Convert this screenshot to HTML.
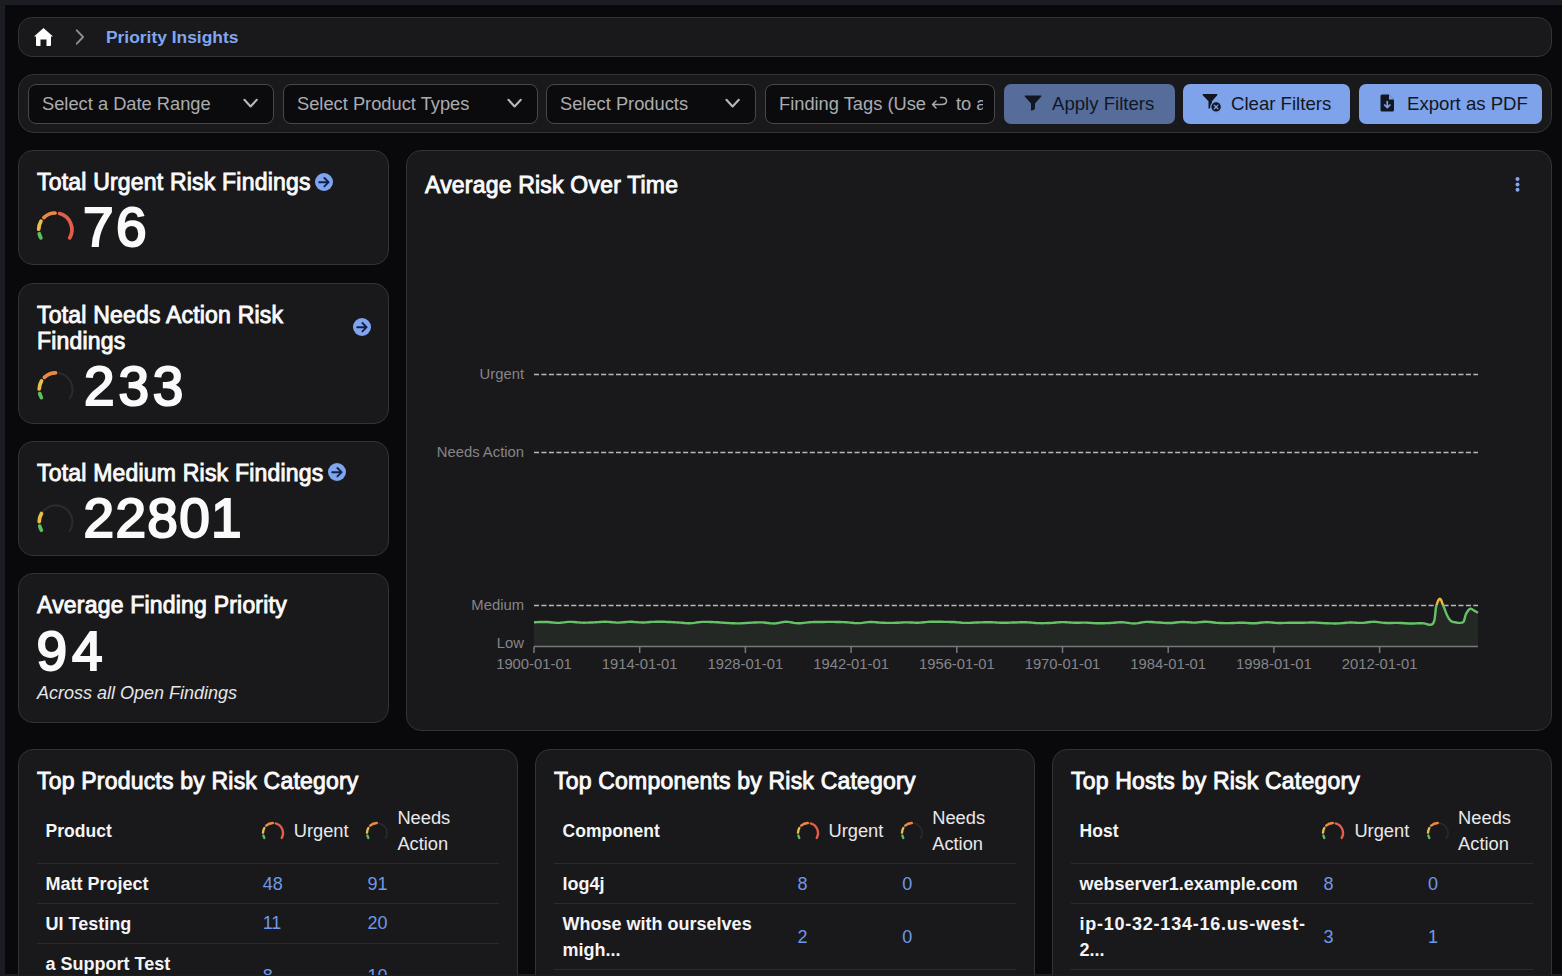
<!DOCTYPE html>
<html><head><meta charset="utf-8">
<style>
*{box-sizing:border-box;margin:0;padding:0}
html,body{width:1562px;height:976px;overflow:hidden;background:#1b1d22;font-family:"Liberation Sans",sans-serif;color:#fff}
#main{position:absolute;left:5px;top:5px;width:1557px;height:969px;background:#09090b;overflow:hidden}
.abs{position:absolute}
.box{position:absolute;background:#19191c;border:1px solid #333336;border-radius:15px}
.sel{position:absolute;top:84px;height:40px;background:#0b0b0d;border:1px solid #48484c;border-radius:8px;color:#abacb0;font-size:18.3px;line-height:38px;padding-left:13px;white-space:nowrap;overflow:hidden}
.sel svg{position:absolute;right:14px;top:13px}
.btn{position:absolute;top:84px;height:40px;border-radius:7px;background:#7ea3ea;color:#111622;font-size:18.6px;line-height:40px;white-space:nowrap}
.btn svg{position:absolute}
.btn span{position:absolute;top:0}
.title{position:absolute;font-weight:normal;-webkit-text-stroke:0.9px #fafafa;font-size:23px;line-height:26px;letter-spacing:0.2px;white-space:nowrap;color:#fafafa}
.big{position:absolute;font-weight:normal;-webkit-text-stroke:2.1px #fafafa;font-size:55px;line-height:1;letter-spacing:1.3px;color:#fafafa}
.gl{position:absolute;font-size:14.8px;color:#858589;text-align:right;white-space:nowrap}
.xl{position:absolute;font-size:14.8px;color:#858589;white-space:nowrap;transform:translateX(-50%)}
.th{position:absolute;font-weight:bold;font-size:17.5px;line-height:22px;white-space:nowrap;color:#f4f4f5}
.thn{position:absolute;font-size:18.3px;line-height:22px;white-space:nowrap;color:#e8e8ea}
.td{position:absolute;font-weight:bold;font-size:18px;line-height:26px;white-space:nowrap;color:#f4f4f5}
.num{position:absolute;font-size:18px;line-height:22px;color:#6f98e6}
.sep{position:absolute;height:1px;background:#2b2b2e}
</style></head><body>
<div id="main"></div>
<!-- breadcrumb -->
<div class="box" style="left:18px;top:17px;width:1534px;height:40px;border-radius:14px"></div>
<svg class="abs" style="left:33px;top:27px" width="21" height="20" viewBox="0 0 21 20"><path d="M10.5 1 L20 9.5 L18 9.5 L18 18 Q18 19 17 19 L13.5 19 L13.5 12.5 L7.5 12.5 L7.5 19 L4 19 Q3 19 3 18 L3 9.5 L1 9.5 Z" fill="#fff"/></svg>
<svg class="abs" style="left:73px;top:28px" width="14" height="18" viewBox="0 0 14 18"><path d="M3.8 2.3 L10.1 9 L3.8 15.7" stroke="#8e8e92" stroke-width="1.9" fill="none" stroke-linecap="round" stroke-linejoin="round"/></svg>
<div class="abs" style="left:106px;top:27px;font-size:17.4px;font-weight:bold;color:#80a7ef;white-space:nowrap">Priority Insights</div>

<!-- filter bar -->
<div class="box" style="left:18px;top:74px;width:1534px;height:59px;border-radius:16px"></div>
<div class="sel" style="left:28px;width:246px">Select a Date Range<svg width="16" height="12" viewBox="0 0 16 12"><path d="M1.4 1.8 L7.6 8.5 L13.8 1.8" stroke="#b6b6b9" stroke-width="2.1" fill="none" stroke-linecap="round" stroke-linejoin="round"/></svg></div>
<div class="sel" style="left:283px;width:255px">Select Product Types<svg width="16" height="12" viewBox="0 0 16 12"><path d="M1.4 1.8 L7.6 8.5 L13.8 1.8" stroke="#b6b6b9" stroke-width="2.1" fill="none" stroke-linecap="round" stroke-linejoin="round"/></svg></div>
<div class="sel" style="left:546px;width:210px">Select Products<svg width="16" height="12" viewBox="0 0 16 12"><path d="M1.4 1.8 L7.6 8.5 L13.8 1.8" stroke="#b6b6b9" stroke-width="2.1" fill="none" stroke-linecap="round" stroke-linejoin="round"/></svg></div>
<div class="sel" style="left:765px;width:230px"><div style="position:absolute;left:13px;top:0;width:204px;height:38px;overflow:hidden"><span style="position:absolute;left:0;top:0">Finding Tags (Use</span><svg style="position:absolute;left:151.5px;top:11px" width="18" height="15" viewBox="0 0 18 15"><path d="M1.5 8.5H10.5Q15.5 8.5 15.5 5Q15.5 1.5 11 1.5H9.5M5 5L1.5 8.5L5 12" stroke="#a9a9ad" stroke-width="1.5" fill="none" stroke-linecap="round" stroke-linejoin="round"/></svg><span style="position:absolute;left:177px;top:0">to add)</span></div></div>

<div class="btn" style="left:1004px;width:171px;background:#566d9c"><svg style="left:20px;top:11px" width="18" height="16" viewBox="0 0 18 16"><path d="M1.3 0.4H16.7Q18 0.4 17.2 1.5L11 8.6V13.6Q11 14.2 10.4 14.5L7.9 15.6Q7 16 7 15V8.6L0.8 1.5Q0 0.4 1.3 0.4Z" fill="#121622"/></svg><span style="left:48px">Apply Filters</span></div>
<div class="btn" style="left:1183px;width:167px"><svg style="left:18px;top:9px" width="22" height="20" viewBox="0 0 22 20"><path d="M2.4 1.1H15.6Q17 1.1 16.2 2.2L11 8.2V13.5Q11 14 10.5 14.3L8.3 15.5Q7.5 16 7.5 15V8.2L1.8 2.2Q1 1.1 2.4 1.1Z" fill="#121622"/><circle cx="15.1" cy="13.9" r="5.3" fill="#121622" stroke="#7ea3ea" stroke-width="1.2"/><path d="M13.3 12.1L16.9 15.7M16.9 12.1L13.3 15.7" stroke="#7ea3ea" stroke-width="1.3" stroke-linecap="round"/></svg><span style="left:48px">Clear Filters</span></div>
<div class="btn" style="left:1359px;width:183px"><svg style="left:21px;top:10px" width="15" height="18" viewBox="0 0 15 18"><path d="M0.5 1.9Q0.5 0.4 2 0.4H9L14 5.4V15.9Q14 17.4 12.5 17.4H2Q0.5 17.4 0.5 15.9Z" fill="#121622"/><path d="M9 0.4V5.4H14Z" fill="#7ea3ea"/><path d="M9.6 0.9V4.8H13.5" fill="none" stroke="#121622" stroke-width="0"/><path d="M7.25 7.5V13.5M4.6 11 7.25 13.6 9.9 11" stroke="#7ea3ea" stroke-width="1.7" fill="none" stroke-linecap="round" stroke-linejoin="round"/></svg><span style="left:48px">Export as PDF</span></div>

<!-- stat cards -->
<div class="box" style="left:18px;top:150px;width:371px;height:115px"></div>
<div class="box" style="left:18px;top:283px;width:371px;height:141px"></div>
<div class="box" style="left:18px;top:441px;width:371px;height:115px"></div>
<div class="box" style="left:18px;top:573px;width:371px;height:150px"></div>

<div class="title" style="left:37px;top:169px">Total Urgent Risk Findings</div>
<div class="title" style="left:37px;top:302px;line-height:26px;white-space:normal;width:300px">Total Needs Action Risk Findings</div>
<div class="title" style="left:37px;top:460px">Total Medium Risk Findings</div>
<div class="title" style="left:37px;top:592px">Average Finding Priority</div>

<div class="big" style="left:83px;top:200px;letter-spacing:2.5px">76</div>
<div class="big" style="left:84px;top:359px;letter-spacing:3.8px">233</div>
<div class="big" style="left:83.5px;top:491px">22801</div>
<div class="big" style="left:36.5px;top:624px;letter-spacing:5px">94</div>
<div class="abs" style="left:37px;top:683px;font-size:18px;font-style:italic;color:#e6e6e8;white-space:nowrap">Across all Open Findings</div>

<!-- chart card -->
<div class="box" style="left:406px;top:150px;width:1146px;height:581px"></div>
<div class="title" style="left:425px;top:172px">Average Risk Over Time</div>
<svg class="abs" style="left:1513px;top:175px" width="9" height="19"><circle cx="4.5" cy="4" r="2" fill="#80a7ef"/><circle cx="4.5" cy="9.4" r="2" fill="#80a7ef"/><circle cx="4.5" cy="14.8" r="2" fill="#80a7ef"/></svg>

<svg class="abs" style="left:0;top:0" width="400" height="560"><path d="M40.87 237.80A16.6 16.6 0 0 1 39.22 233.72" stroke="#5fbf5f" stroke-width="3.7" fill="none" stroke-linecap="round"/><path d="M38.70 229.20A16.6 16.6 0 0 1 41.01 221.15" stroke="#e8bf4a" stroke-width="3.7" fill="none" stroke-linecap="round"/><path d="M43.85 217.58A16.6 16.6 0 0 1 55.04 213.00" stroke="#ea8a42" stroke-width="3.7" fill="none" stroke-linecap="round"/><path d="M59.56 213.56A16.6 16.6 0 0 1 69.73 237.80" stroke="#e35d4b" stroke-width="3.7" fill="none" stroke-linecap="round"/><path d="M58.80 373.07A16.6 16.6 0 0 1 69.82 398.29" stroke="#2b2b2e" stroke-width="2.1" fill="none" stroke-linecap="round"/><path d="M41.37 397.60A16.6 16.6 0 0 1 39.72 393.52" stroke="#5fbf5f" stroke-width="3.7" fill="none" stroke-linecap="round"/><path d="M39.20 389.00A16.6 16.6 0 0 1 41.51 380.95" stroke="#e8bf4a" stroke-width="3.7" fill="none" stroke-linecap="round"/><path d="M44.35 377.38A16.6 16.6 0 0 1 55.54 372.80" stroke="#ea8a42" stroke-width="3.7" fill="none" stroke-linecap="round"/><path d="M43.45 510.91A16.6 16.6 0 0 1 69.82 530.89" stroke="#2b2b2e" stroke-width="2.1" fill="none" stroke-linecap="round"/><path d="M41.37 530.20A16.6 16.6 0 0 1 39.72 526.12" stroke="#5fbf5f" stroke-width="3.7" fill="none" stroke-linecap="round"/><path d="M39.20 521.60A16.6 16.6 0 0 1 41.51 513.55" stroke="#e8bf4a" stroke-width="3.7" fill="none" stroke-linecap="round"/></svg><svg class="abs" style="left:315px;top:172.6px" width="18" height="18" viewBox="0 0 18 18"><circle cx="9" cy="9" r="9" fill="#7fa5ee"/><path d="M4.2 9.2H13.6M9.4 5 13.6 9.2 9.4 13.4" stroke="#15204a" stroke-width="1.9" fill="none" stroke-linecap="round" stroke-linejoin="round"/></svg><svg class="abs" style="left:353.3px;top:318px" width="18" height="18" viewBox="0 0 18 18"><circle cx="9" cy="9" r="9" fill="#7fa5ee"/><path d="M4.2 9.2H13.6M9.4 5 13.6 9.2 9.4 13.4" stroke="#15204a" stroke-width="1.9" fill="none" stroke-linecap="round" stroke-linejoin="round"/></svg><svg class="abs" style="left:327.5px;top:463px" width="18" height="18" viewBox="0 0 18 18"><circle cx="9" cy="9" r="9" fill="#7fa5ee"/><path d="M4.2 9.2H13.6M9.4 5 13.6 9.2 9.4 13.4" stroke="#15204a" stroke-width="1.9" fill="none" stroke-linecap="round" stroke-linejoin="round"/></svg><svg class="abs" style="left:0;top:0" width="1562" height="976">
<path d="M534 374.5H1478" stroke="#b8b8bb" stroke-width="1.3" stroke-dasharray="5.05 2.405"/>
<path d="M534 452.5H1478" stroke="#b8b8bb" stroke-width="1.3" stroke-dasharray="5.05 2.405"/>
<path d="M534 605.5H1478" stroke="#b8b8bb" stroke-width="1.3" stroke-dasharray="5.05 2.405"/>
<path d="M534.0 622.28 L535.3 622.24 L537.1 622.16 L539.2 622.07 L541.6 622.00 L543.9 621.96 L546.0 621.97 L548.0 622.07 L550.0 622.25 L552.0 622.47 L554.0 622.67 L556.0 622.82 L558.0 622.87 L560.0 622.79 L562.0 622.60 L564.0 622.36 L566.0 622.11 L568.0 621.92 L570.0 621.83 L572.0 621.87 L574.0 622.01 L576.0 622.20 L578.0 622.40 L580.0 622.57 L582.0 622.66 L584.0 622.68 L586.0 622.66 L588.0 622.60 L590.0 622.52 L592.0 622.44 L594.0 622.36 L596.0 622.26 L598.0 622.14 L600.0 622.01 L602.0 621.90 L604.0 621.82 L606.0 621.80 L608.0 621.88 L610.0 622.03 L612.0 622.23 L614.0 622.42 L616.0 622.56 L618.0 622.61 L620.0 622.55 L622.0 622.40 L624.0 622.20 L626.0 622.00 L628.0 621.84 L630.0 621.77 L632.0 621.81 L634.0 621.94 L636.0 622.11 L638.0 622.29 L640.0 622.42 L642.0 622.48 L644.0 622.44 L646.0 622.34 L648.0 622.20 L650.0 622.04 L652.0 621.91 L654.0 621.83 L656.0 621.79 L658.0 621.77 L660.0 621.77 L662.0 621.78 L664.0 621.82 L666.0 621.86 L668.0 621.93 L670.0 622.02 L672.0 622.12 L674.0 622.23 L676.0 622.35 L678.0 622.46 L680.0 622.60 L682.0 622.77 L684.0 622.94 L686.0 623.09 L688.0 623.18 L690.0 623.19 L692.0 623.08 L694.0 622.86 L696.0 622.59 L698.0 622.31 L700.0 622.07 L702.0 621.92 L704.0 621.86 L706.0 621.86 L708.0 621.89 L710.0 621.95 L712.0 622.02 L714.0 622.10 L716.0 622.19 L718.0 622.31 L720.0 622.44 L722.0 622.58 L724.0 622.71 L726.0 622.83 L728.0 622.95 L730.0 623.08 L732.0 623.20 L734.0 623.31 L736.0 623.38 L738.0 623.41 L740.0 623.36 L742.0 623.26 L744.0 623.13 L746.0 622.98 L748.0 622.84 L750.0 622.74 L752.0 622.65 L754.0 622.55 L756.0 622.47 L758.0 622.41 L760.0 622.39 L762.0 622.41 L764.0 622.54 L766.0 622.76 L768.0 623.02 L770.0 623.26 L772.0 623.42 L774.0 623.46 L776.0 623.30 L778.0 622.98 L780.0 622.59 L782.0 622.21 L784.0 621.91 L786.0 621.78 L788.0 621.87 L790.0 622.13 L792.0 622.47 L794.0 622.83 L796.0 623.11 L798.0 623.25 L800.0 623.21 L802.0 623.06 L804.0 622.84 L806.0 622.60 L808.0 622.38 L810.0 622.22 L812.0 622.13 L814.0 622.07 L816.0 622.03 L818.0 622.00 L820.0 621.98 L822.0 621.96 L824.0 621.93 L826.0 621.91 L828.0 621.90 L830.0 621.89 L832.0 621.89 L834.0 621.91 L836.0 621.94 L838.0 621.98 L840.0 622.02 L842.0 622.08 L844.0 622.16 L846.0 622.26 L848.0 622.40 L850.0 622.59 L852.0 622.81 L854.0 623.00 L856.0 623.13 L858.0 623.17 L860.0 623.08 L862.0 622.87 L864.0 622.61 L866.0 622.34 L868.0 622.13 L870.0 622.03 L872.0 622.04 L874.0 622.15 L876.0 622.31 L878.0 622.48 L880.0 622.64 L882.0 622.75 L884.0 622.81 L886.0 622.85 L888.0 622.87 L890.0 622.88 L892.0 622.87 L894.0 622.85 L896.0 622.79 L898.0 622.70 L900.0 622.60 L902.0 622.49 L904.0 622.41 L906.0 622.37 L908.0 622.39 L910.0 622.46 L912.0 622.55 L914.0 622.64 L916.0 622.69 L918.0 622.69 L920.0 622.60 L922.0 622.45 L924.0 622.27 L926.0 622.08 L928.0 621.92 L930.0 621.81 L932.0 621.76 L934.0 621.74 L936.0 621.74 L938.0 621.76 L940.0 621.78 L942.0 621.81 L944.0 621.83 L946.0 621.85 L948.0 621.89 L950.0 621.93 L952.0 621.99 L954.0 622.07 L956.0 622.19 L958.0 622.36 L960.0 622.54 L962.0 622.72 L964.0 622.85 L966.0 622.92 L968.0 622.92 L970.0 622.86 L972.0 622.76 L974.0 622.65 L976.0 622.55 L978.0 622.47 L980.0 622.41 L982.0 622.36 L984.0 622.31 L986.0 622.27 L988.0 622.26 L990.0 622.27 L992.0 622.32 L994.0 622.40 L996.0 622.51 L998.0 622.62 L1000.0 622.71 L1002.0 622.75 L1004.0 622.76 L1006.0 622.73 L1008.0 622.68 L1010.0 622.62 L1012.0 622.57 L1014.0 622.52 L1016.0 622.46 L1018.0 622.38 L1020.0 622.31 L1022.0 622.25 L1024.0 622.22 L1026.0 622.24 L1028.0 622.33 L1030.0 622.49 L1032.0 622.68 L1034.0 622.87 L1036.0 623.03 L1038.0 623.13 L1040.0 623.17 L1042.0 623.18 L1044.0 623.15 L1046.0 623.10 L1048.0 623.04 L1050.0 622.96 L1052.0 622.84 L1054.0 622.68 L1056.0 622.50 L1058.0 622.33 L1060.0 622.20 L1062.0 622.14 L1064.0 622.16 L1066.0 622.26 L1068.0 622.39 L1070.0 622.53 L1072.0 622.66 L1074.0 622.73 L1076.0 622.75 L1078.0 622.73 L1080.0 622.69 L1082.0 622.65 L1084.0 622.63 L1086.0 622.65 L1088.0 622.72 L1090.0 622.84 L1092.0 622.97 L1094.0 623.10 L1096.0 623.21 L1098.0 623.28 L1100.0 623.29 L1102.0 623.27 L1104.0 623.23 L1106.0 623.17 L1108.0 623.10 L1110.0 623.01 L1112.0 622.89 L1114.0 622.71 L1116.0 622.52 L1118.0 622.35 L1120.0 622.24 L1122.0 622.22 L1124.0 622.34 L1126.0 622.59 L1128.0 622.89 L1130.0 623.18 L1132.0 623.39 L1134.0 623.46 L1136.0 623.34 L1138.0 623.08 L1140.0 622.73 L1142.0 622.38 L1144.0 622.08 L1146.0 621.91 L1148.0 621.88 L1150.0 621.93 L1152.0 622.05 L1154.0 622.19 L1156.0 622.33 L1158.0 622.45 L1160.0 622.57 L1162.0 622.71 L1164.0 622.86 L1166.0 622.98 L1168.0 623.06 L1170.0 623.06 L1172.0 622.96 L1174.0 622.76 L1176.0 622.52 L1178.0 622.27 L1180.0 622.08 L1182.0 621.97 L1184.0 621.99 L1186.0 622.10 L1188.0 622.26 L1190.0 622.42 L1192.0 622.54 L1194.0 622.58 L1196.0 622.50 L1198.0 622.34 L1200.0 622.14 L1202.0 621.95 L1204.0 621.81 L1206.0 621.77 L1208.0 621.86 L1210.0 622.04 L1212.0 622.28 L1214.0 622.52 L1216.0 622.75 L1218.0 622.90 L1220.0 622.99 L1222.0 623.05 L1224.0 623.08 L1226.0 623.09 L1228.0 623.09 L1230.0 623.08 L1232.0 623.04 L1234.0 622.97 L1236.0 622.88 L1238.0 622.80 L1240.0 622.74 L1242.0 622.73 L1244.0 622.79 L1246.0 622.90 L1248.0 623.05 L1250.0 623.18 L1252.0 623.26 L1254.0 623.28 L1256.0 623.18 L1258.0 622.99 L1260.0 622.76 L1262.0 622.53 L1264.0 622.35 L1266.0 622.26 L1268.0 622.29 L1270.0 622.40 L1272.0 622.56 L1274.0 622.72 L1276.0 622.87 L1278.0 622.95 L1280.0 622.97 L1282.0 622.95 L1284.0 622.91 L1286.0 622.85 L1288.0 622.80 L1290.0 622.77 L1292.0 622.76 L1294.0 622.76 L1296.0 622.76 L1298.0 622.76 L1300.0 622.76 L1302.0 622.74 L1304.0 622.71 L1306.0 622.65 L1308.0 622.59 L1310.0 622.54 L1312.0 622.51 L1314.0 622.52 L1316.0 622.59 L1318.0 622.70 L1320.0 622.84 L1322.0 622.99 L1324.0 623.12 L1326.0 623.21 L1328.0 623.28 L1330.0 623.35 L1332.0 623.40 L1334.0 623.43 L1336.0 623.43 L1338.0 623.40 L1340.0 623.31 L1342.0 623.15 L1344.0 622.97 L1346.0 622.79 L1348.0 622.64 L1350.0 622.55 L1352.0 622.56 L1354.0 622.63 L1356.0 622.74 L1358.0 622.84 L1360.0 622.91 L1362.0 622.90 L1364.0 622.77 L1366.0 622.56 L1368.0 622.30 L1370.0 622.06 L1372.0 621.88 L1374.0 621.81 L1376.0 621.89 L1378.0 622.07 L1380.0 622.32 L1382.0 622.59 L1384.0 622.82 L1386.0 622.96 L1388.0 623.01 L1390.0 623.00 L1392.0 622.95 L1394.0 622.89 L1396.0 622.85 L1398.0 622.86 L1400.0 622.94 L1402.0 623.05 L1404.0 623.19 L1406.0 623.32 L1408.0 623.43 L1410.0 623.49 L1412.0 623.48 L1414.0 623.43 L1416.1 623.35 L1418.1 623.26 L1420.1 623.20 L1422.0 623.18 L1424.0 623.42 L1426.0 623.93 L1428.0 624.47 L1429.9 624.77 L1431.6 624.56 L1433.0 623.60 L1434.0 621.59 L1434.7 618.68 L1435.1 615.28 L1435.5 611.76 L1435.8 608.54 L1436.3 606.00 L1436.9 604.03 L1437.5 602.30 L1438.1 600.85 L1438.7 599.75 L1439.3 599.05 L1439.9 598.80 L1440.5 599.15 L1441.1 600.07 L1441.7 601.39 L1442.2 602.93 L1442.8 604.53 L1443.4 606.00 L1444.0 607.44 L1444.6 609.00 L1445.2 610.61 L1445.8 612.19 L1446.4 613.68 L1447.0 615.00 L1447.6 616.16 L1448.1 617.23 L1448.6 618.20 L1449.2 619.07 L1449.8 619.84 L1450.4 620.50 L1451.1 621.04 L1451.7 621.44 L1452.4 621.75 L1453.2 621.98 L1454.0 622.15 L1455.0 622.30 L1456.2 622.49 L1457.6 622.71 L1459.1 622.87 L1460.6 622.90 L1461.9 622.71 L1463.0 622.20 L1463.8 621.27 L1464.3 619.96 L1464.7 618.42 L1465.1 616.81 L1465.5 615.29 L1466.0 614.00 L1466.6 612.88 L1467.3 611.79 L1468.0 610.78 L1468.7 609.91 L1469.4 609.23 L1470.1 608.80 L1470.8 608.68 L1471.4 608.83 L1472.1 609.18 L1472.7 609.63 L1473.3 610.10 L1474.0 610.50 L1474.7 610.88 L1475.5 611.31 L1476.2 611.76 L1477.0 612.18 L1477.6 612.54 L1478.0 612.80 L1478 646.5 L534 646.5 Z" fill="#232824"/>
<clipPath id="abv"><rect x="0" y="0" width="1562" height="605"/></clipPath>
<clipPath id="blw"><rect x="0" y="605" width="1562" height="400"/></clipPath>
<path d="M534.0 622.28 L535.3 622.24 L537.1 622.16 L539.2 622.07 L541.6 622.00 L543.9 621.96 L546.0 621.97 L548.0 622.07 L550.0 622.25 L552.0 622.47 L554.0 622.67 L556.0 622.82 L558.0 622.87 L560.0 622.79 L562.0 622.60 L564.0 622.36 L566.0 622.11 L568.0 621.92 L570.0 621.83 L572.0 621.87 L574.0 622.01 L576.0 622.20 L578.0 622.40 L580.0 622.57 L582.0 622.66 L584.0 622.68 L586.0 622.66 L588.0 622.60 L590.0 622.52 L592.0 622.44 L594.0 622.36 L596.0 622.26 L598.0 622.14 L600.0 622.01 L602.0 621.90 L604.0 621.82 L606.0 621.80 L608.0 621.88 L610.0 622.03 L612.0 622.23 L614.0 622.42 L616.0 622.56 L618.0 622.61 L620.0 622.55 L622.0 622.40 L624.0 622.20 L626.0 622.00 L628.0 621.84 L630.0 621.77 L632.0 621.81 L634.0 621.94 L636.0 622.11 L638.0 622.29 L640.0 622.42 L642.0 622.48 L644.0 622.44 L646.0 622.34 L648.0 622.20 L650.0 622.04 L652.0 621.91 L654.0 621.83 L656.0 621.79 L658.0 621.77 L660.0 621.77 L662.0 621.78 L664.0 621.82 L666.0 621.86 L668.0 621.93 L670.0 622.02 L672.0 622.12 L674.0 622.23 L676.0 622.35 L678.0 622.46 L680.0 622.60 L682.0 622.77 L684.0 622.94 L686.0 623.09 L688.0 623.18 L690.0 623.19 L692.0 623.08 L694.0 622.86 L696.0 622.59 L698.0 622.31 L700.0 622.07 L702.0 621.92 L704.0 621.86 L706.0 621.86 L708.0 621.89 L710.0 621.95 L712.0 622.02 L714.0 622.10 L716.0 622.19 L718.0 622.31 L720.0 622.44 L722.0 622.58 L724.0 622.71 L726.0 622.83 L728.0 622.95 L730.0 623.08 L732.0 623.20 L734.0 623.31 L736.0 623.38 L738.0 623.41 L740.0 623.36 L742.0 623.26 L744.0 623.13 L746.0 622.98 L748.0 622.84 L750.0 622.74 L752.0 622.65 L754.0 622.55 L756.0 622.47 L758.0 622.41 L760.0 622.39 L762.0 622.41 L764.0 622.54 L766.0 622.76 L768.0 623.02 L770.0 623.26 L772.0 623.42 L774.0 623.46 L776.0 623.30 L778.0 622.98 L780.0 622.59 L782.0 622.21 L784.0 621.91 L786.0 621.78 L788.0 621.87 L790.0 622.13 L792.0 622.47 L794.0 622.83 L796.0 623.11 L798.0 623.25 L800.0 623.21 L802.0 623.06 L804.0 622.84 L806.0 622.60 L808.0 622.38 L810.0 622.22 L812.0 622.13 L814.0 622.07 L816.0 622.03 L818.0 622.00 L820.0 621.98 L822.0 621.96 L824.0 621.93 L826.0 621.91 L828.0 621.90 L830.0 621.89 L832.0 621.89 L834.0 621.91 L836.0 621.94 L838.0 621.98 L840.0 622.02 L842.0 622.08 L844.0 622.16 L846.0 622.26 L848.0 622.40 L850.0 622.59 L852.0 622.81 L854.0 623.00 L856.0 623.13 L858.0 623.17 L860.0 623.08 L862.0 622.87 L864.0 622.61 L866.0 622.34 L868.0 622.13 L870.0 622.03 L872.0 622.04 L874.0 622.15 L876.0 622.31 L878.0 622.48 L880.0 622.64 L882.0 622.75 L884.0 622.81 L886.0 622.85 L888.0 622.87 L890.0 622.88 L892.0 622.87 L894.0 622.85 L896.0 622.79 L898.0 622.70 L900.0 622.60 L902.0 622.49 L904.0 622.41 L906.0 622.37 L908.0 622.39 L910.0 622.46 L912.0 622.55 L914.0 622.64 L916.0 622.69 L918.0 622.69 L920.0 622.60 L922.0 622.45 L924.0 622.27 L926.0 622.08 L928.0 621.92 L930.0 621.81 L932.0 621.76 L934.0 621.74 L936.0 621.74 L938.0 621.76 L940.0 621.78 L942.0 621.81 L944.0 621.83 L946.0 621.85 L948.0 621.89 L950.0 621.93 L952.0 621.99 L954.0 622.07 L956.0 622.19 L958.0 622.36 L960.0 622.54 L962.0 622.72 L964.0 622.85 L966.0 622.92 L968.0 622.92 L970.0 622.86 L972.0 622.76 L974.0 622.65 L976.0 622.55 L978.0 622.47 L980.0 622.41 L982.0 622.36 L984.0 622.31 L986.0 622.27 L988.0 622.26 L990.0 622.27 L992.0 622.32 L994.0 622.40 L996.0 622.51 L998.0 622.62 L1000.0 622.71 L1002.0 622.75 L1004.0 622.76 L1006.0 622.73 L1008.0 622.68 L1010.0 622.62 L1012.0 622.57 L1014.0 622.52 L1016.0 622.46 L1018.0 622.38 L1020.0 622.31 L1022.0 622.25 L1024.0 622.22 L1026.0 622.24 L1028.0 622.33 L1030.0 622.49 L1032.0 622.68 L1034.0 622.87 L1036.0 623.03 L1038.0 623.13 L1040.0 623.17 L1042.0 623.18 L1044.0 623.15 L1046.0 623.10 L1048.0 623.04 L1050.0 622.96 L1052.0 622.84 L1054.0 622.68 L1056.0 622.50 L1058.0 622.33 L1060.0 622.20 L1062.0 622.14 L1064.0 622.16 L1066.0 622.26 L1068.0 622.39 L1070.0 622.53 L1072.0 622.66 L1074.0 622.73 L1076.0 622.75 L1078.0 622.73 L1080.0 622.69 L1082.0 622.65 L1084.0 622.63 L1086.0 622.65 L1088.0 622.72 L1090.0 622.84 L1092.0 622.97 L1094.0 623.10 L1096.0 623.21 L1098.0 623.28 L1100.0 623.29 L1102.0 623.27 L1104.0 623.23 L1106.0 623.17 L1108.0 623.10 L1110.0 623.01 L1112.0 622.89 L1114.0 622.71 L1116.0 622.52 L1118.0 622.35 L1120.0 622.24 L1122.0 622.22 L1124.0 622.34 L1126.0 622.59 L1128.0 622.89 L1130.0 623.18 L1132.0 623.39 L1134.0 623.46 L1136.0 623.34 L1138.0 623.08 L1140.0 622.73 L1142.0 622.38 L1144.0 622.08 L1146.0 621.91 L1148.0 621.88 L1150.0 621.93 L1152.0 622.05 L1154.0 622.19 L1156.0 622.33 L1158.0 622.45 L1160.0 622.57 L1162.0 622.71 L1164.0 622.86 L1166.0 622.98 L1168.0 623.06 L1170.0 623.06 L1172.0 622.96 L1174.0 622.76 L1176.0 622.52 L1178.0 622.27 L1180.0 622.08 L1182.0 621.97 L1184.0 621.99 L1186.0 622.10 L1188.0 622.26 L1190.0 622.42 L1192.0 622.54 L1194.0 622.58 L1196.0 622.50 L1198.0 622.34 L1200.0 622.14 L1202.0 621.95 L1204.0 621.81 L1206.0 621.77 L1208.0 621.86 L1210.0 622.04 L1212.0 622.28 L1214.0 622.52 L1216.0 622.75 L1218.0 622.90 L1220.0 622.99 L1222.0 623.05 L1224.0 623.08 L1226.0 623.09 L1228.0 623.09 L1230.0 623.08 L1232.0 623.04 L1234.0 622.97 L1236.0 622.88 L1238.0 622.80 L1240.0 622.74 L1242.0 622.73 L1244.0 622.79 L1246.0 622.90 L1248.0 623.05 L1250.0 623.18 L1252.0 623.26 L1254.0 623.28 L1256.0 623.18 L1258.0 622.99 L1260.0 622.76 L1262.0 622.53 L1264.0 622.35 L1266.0 622.26 L1268.0 622.29 L1270.0 622.40 L1272.0 622.56 L1274.0 622.72 L1276.0 622.87 L1278.0 622.95 L1280.0 622.97 L1282.0 622.95 L1284.0 622.91 L1286.0 622.85 L1288.0 622.80 L1290.0 622.77 L1292.0 622.76 L1294.0 622.76 L1296.0 622.76 L1298.0 622.76 L1300.0 622.76 L1302.0 622.74 L1304.0 622.71 L1306.0 622.65 L1308.0 622.59 L1310.0 622.54 L1312.0 622.51 L1314.0 622.52 L1316.0 622.59 L1318.0 622.70 L1320.0 622.84 L1322.0 622.99 L1324.0 623.12 L1326.0 623.21 L1328.0 623.28 L1330.0 623.35 L1332.0 623.40 L1334.0 623.43 L1336.0 623.43 L1338.0 623.40 L1340.0 623.31 L1342.0 623.15 L1344.0 622.97 L1346.0 622.79 L1348.0 622.64 L1350.0 622.55 L1352.0 622.56 L1354.0 622.63 L1356.0 622.74 L1358.0 622.84 L1360.0 622.91 L1362.0 622.90 L1364.0 622.77 L1366.0 622.56 L1368.0 622.30 L1370.0 622.06 L1372.0 621.88 L1374.0 621.81 L1376.0 621.89 L1378.0 622.07 L1380.0 622.32 L1382.0 622.59 L1384.0 622.82 L1386.0 622.96 L1388.0 623.01 L1390.0 623.00 L1392.0 622.95 L1394.0 622.89 L1396.0 622.85 L1398.0 622.86 L1400.0 622.94 L1402.0 623.05 L1404.0 623.19 L1406.0 623.32 L1408.0 623.43 L1410.0 623.49 L1412.0 623.48 L1414.0 623.43 L1416.1 623.35 L1418.1 623.26 L1420.1 623.20 L1422.0 623.18 L1424.0 623.42 L1426.0 623.93 L1428.0 624.47 L1429.9 624.77 L1431.6 624.56 L1433.0 623.60 L1434.0 621.59 L1434.7 618.68 L1435.1 615.28 L1435.5 611.76 L1435.8 608.54 L1436.3 606.00 L1436.9 604.03 L1437.5 602.30 L1438.1 600.85 L1438.7 599.75 L1439.3 599.05 L1439.9 598.80 L1440.5 599.15 L1441.1 600.07 L1441.7 601.39 L1442.2 602.93 L1442.8 604.53 L1443.4 606.00 L1444.0 607.44 L1444.6 609.00 L1445.2 610.61 L1445.8 612.19 L1446.4 613.68 L1447.0 615.00 L1447.6 616.16 L1448.1 617.23 L1448.6 618.20 L1449.2 619.07 L1449.8 619.84 L1450.4 620.50 L1451.1 621.04 L1451.7 621.44 L1452.4 621.75 L1453.2 621.98 L1454.0 622.15 L1455.0 622.30 L1456.2 622.49 L1457.6 622.71 L1459.1 622.87 L1460.6 622.90 L1461.9 622.71 L1463.0 622.20 L1463.8 621.27 L1464.3 619.96 L1464.7 618.42 L1465.1 616.81 L1465.5 615.29 L1466.0 614.00 L1466.6 612.88 L1467.3 611.79 L1468.0 610.78 L1468.7 609.91 L1469.4 609.23 L1470.1 608.80 L1470.8 608.68 L1471.4 608.83 L1472.1 609.18 L1472.7 609.63 L1473.3 610.10 L1474.0 610.50 L1474.7 610.88 L1475.5 611.31 L1476.2 611.76 L1477.0 612.18 L1477.6 612.54 L1478.0 612.80" stroke="#66c266" stroke-width="2.4" fill="none" clip-path="url(#blw)"/>
<path d="M534.0 622.28 L535.3 622.24 L537.1 622.16 L539.2 622.07 L541.6 622.00 L543.9 621.96 L546.0 621.97 L548.0 622.07 L550.0 622.25 L552.0 622.47 L554.0 622.67 L556.0 622.82 L558.0 622.87 L560.0 622.79 L562.0 622.60 L564.0 622.36 L566.0 622.11 L568.0 621.92 L570.0 621.83 L572.0 621.87 L574.0 622.01 L576.0 622.20 L578.0 622.40 L580.0 622.57 L582.0 622.66 L584.0 622.68 L586.0 622.66 L588.0 622.60 L590.0 622.52 L592.0 622.44 L594.0 622.36 L596.0 622.26 L598.0 622.14 L600.0 622.01 L602.0 621.90 L604.0 621.82 L606.0 621.80 L608.0 621.88 L610.0 622.03 L612.0 622.23 L614.0 622.42 L616.0 622.56 L618.0 622.61 L620.0 622.55 L622.0 622.40 L624.0 622.20 L626.0 622.00 L628.0 621.84 L630.0 621.77 L632.0 621.81 L634.0 621.94 L636.0 622.11 L638.0 622.29 L640.0 622.42 L642.0 622.48 L644.0 622.44 L646.0 622.34 L648.0 622.20 L650.0 622.04 L652.0 621.91 L654.0 621.83 L656.0 621.79 L658.0 621.77 L660.0 621.77 L662.0 621.78 L664.0 621.82 L666.0 621.86 L668.0 621.93 L670.0 622.02 L672.0 622.12 L674.0 622.23 L676.0 622.35 L678.0 622.46 L680.0 622.60 L682.0 622.77 L684.0 622.94 L686.0 623.09 L688.0 623.18 L690.0 623.19 L692.0 623.08 L694.0 622.86 L696.0 622.59 L698.0 622.31 L700.0 622.07 L702.0 621.92 L704.0 621.86 L706.0 621.86 L708.0 621.89 L710.0 621.95 L712.0 622.02 L714.0 622.10 L716.0 622.19 L718.0 622.31 L720.0 622.44 L722.0 622.58 L724.0 622.71 L726.0 622.83 L728.0 622.95 L730.0 623.08 L732.0 623.20 L734.0 623.31 L736.0 623.38 L738.0 623.41 L740.0 623.36 L742.0 623.26 L744.0 623.13 L746.0 622.98 L748.0 622.84 L750.0 622.74 L752.0 622.65 L754.0 622.55 L756.0 622.47 L758.0 622.41 L760.0 622.39 L762.0 622.41 L764.0 622.54 L766.0 622.76 L768.0 623.02 L770.0 623.26 L772.0 623.42 L774.0 623.46 L776.0 623.30 L778.0 622.98 L780.0 622.59 L782.0 622.21 L784.0 621.91 L786.0 621.78 L788.0 621.87 L790.0 622.13 L792.0 622.47 L794.0 622.83 L796.0 623.11 L798.0 623.25 L800.0 623.21 L802.0 623.06 L804.0 622.84 L806.0 622.60 L808.0 622.38 L810.0 622.22 L812.0 622.13 L814.0 622.07 L816.0 622.03 L818.0 622.00 L820.0 621.98 L822.0 621.96 L824.0 621.93 L826.0 621.91 L828.0 621.90 L830.0 621.89 L832.0 621.89 L834.0 621.91 L836.0 621.94 L838.0 621.98 L840.0 622.02 L842.0 622.08 L844.0 622.16 L846.0 622.26 L848.0 622.40 L850.0 622.59 L852.0 622.81 L854.0 623.00 L856.0 623.13 L858.0 623.17 L860.0 623.08 L862.0 622.87 L864.0 622.61 L866.0 622.34 L868.0 622.13 L870.0 622.03 L872.0 622.04 L874.0 622.15 L876.0 622.31 L878.0 622.48 L880.0 622.64 L882.0 622.75 L884.0 622.81 L886.0 622.85 L888.0 622.87 L890.0 622.88 L892.0 622.87 L894.0 622.85 L896.0 622.79 L898.0 622.70 L900.0 622.60 L902.0 622.49 L904.0 622.41 L906.0 622.37 L908.0 622.39 L910.0 622.46 L912.0 622.55 L914.0 622.64 L916.0 622.69 L918.0 622.69 L920.0 622.60 L922.0 622.45 L924.0 622.27 L926.0 622.08 L928.0 621.92 L930.0 621.81 L932.0 621.76 L934.0 621.74 L936.0 621.74 L938.0 621.76 L940.0 621.78 L942.0 621.81 L944.0 621.83 L946.0 621.85 L948.0 621.89 L950.0 621.93 L952.0 621.99 L954.0 622.07 L956.0 622.19 L958.0 622.36 L960.0 622.54 L962.0 622.72 L964.0 622.85 L966.0 622.92 L968.0 622.92 L970.0 622.86 L972.0 622.76 L974.0 622.65 L976.0 622.55 L978.0 622.47 L980.0 622.41 L982.0 622.36 L984.0 622.31 L986.0 622.27 L988.0 622.26 L990.0 622.27 L992.0 622.32 L994.0 622.40 L996.0 622.51 L998.0 622.62 L1000.0 622.71 L1002.0 622.75 L1004.0 622.76 L1006.0 622.73 L1008.0 622.68 L1010.0 622.62 L1012.0 622.57 L1014.0 622.52 L1016.0 622.46 L1018.0 622.38 L1020.0 622.31 L1022.0 622.25 L1024.0 622.22 L1026.0 622.24 L1028.0 622.33 L1030.0 622.49 L1032.0 622.68 L1034.0 622.87 L1036.0 623.03 L1038.0 623.13 L1040.0 623.17 L1042.0 623.18 L1044.0 623.15 L1046.0 623.10 L1048.0 623.04 L1050.0 622.96 L1052.0 622.84 L1054.0 622.68 L1056.0 622.50 L1058.0 622.33 L1060.0 622.20 L1062.0 622.14 L1064.0 622.16 L1066.0 622.26 L1068.0 622.39 L1070.0 622.53 L1072.0 622.66 L1074.0 622.73 L1076.0 622.75 L1078.0 622.73 L1080.0 622.69 L1082.0 622.65 L1084.0 622.63 L1086.0 622.65 L1088.0 622.72 L1090.0 622.84 L1092.0 622.97 L1094.0 623.10 L1096.0 623.21 L1098.0 623.28 L1100.0 623.29 L1102.0 623.27 L1104.0 623.23 L1106.0 623.17 L1108.0 623.10 L1110.0 623.01 L1112.0 622.89 L1114.0 622.71 L1116.0 622.52 L1118.0 622.35 L1120.0 622.24 L1122.0 622.22 L1124.0 622.34 L1126.0 622.59 L1128.0 622.89 L1130.0 623.18 L1132.0 623.39 L1134.0 623.46 L1136.0 623.34 L1138.0 623.08 L1140.0 622.73 L1142.0 622.38 L1144.0 622.08 L1146.0 621.91 L1148.0 621.88 L1150.0 621.93 L1152.0 622.05 L1154.0 622.19 L1156.0 622.33 L1158.0 622.45 L1160.0 622.57 L1162.0 622.71 L1164.0 622.86 L1166.0 622.98 L1168.0 623.06 L1170.0 623.06 L1172.0 622.96 L1174.0 622.76 L1176.0 622.52 L1178.0 622.27 L1180.0 622.08 L1182.0 621.97 L1184.0 621.99 L1186.0 622.10 L1188.0 622.26 L1190.0 622.42 L1192.0 622.54 L1194.0 622.58 L1196.0 622.50 L1198.0 622.34 L1200.0 622.14 L1202.0 621.95 L1204.0 621.81 L1206.0 621.77 L1208.0 621.86 L1210.0 622.04 L1212.0 622.28 L1214.0 622.52 L1216.0 622.75 L1218.0 622.90 L1220.0 622.99 L1222.0 623.05 L1224.0 623.08 L1226.0 623.09 L1228.0 623.09 L1230.0 623.08 L1232.0 623.04 L1234.0 622.97 L1236.0 622.88 L1238.0 622.80 L1240.0 622.74 L1242.0 622.73 L1244.0 622.79 L1246.0 622.90 L1248.0 623.05 L1250.0 623.18 L1252.0 623.26 L1254.0 623.28 L1256.0 623.18 L1258.0 622.99 L1260.0 622.76 L1262.0 622.53 L1264.0 622.35 L1266.0 622.26 L1268.0 622.29 L1270.0 622.40 L1272.0 622.56 L1274.0 622.72 L1276.0 622.87 L1278.0 622.95 L1280.0 622.97 L1282.0 622.95 L1284.0 622.91 L1286.0 622.85 L1288.0 622.80 L1290.0 622.77 L1292.0 622.76 L1294.0 622.76 L1296.0 622.76 L1298.0 622.76 L1300.0 622.76 L1302.0 622.74 L1304.0 622.71 L1306.0 622.65 L1308.0 622.59 L1310.0 622.54 L1312.0 622.51 L1314.0 622.52 L1316.0 622.59 L1318.0 622.70 L1320.0 622.84 L1322.0 622.99 L1324.0 623.12 L1326.0 623.21 L1328.0 623.28 L1330.0 623.35 L1332.0 623.40 L1334.0 623.43 L1336.0 623.43 L1338.0 623.40 L1340.0 623.31 L1342.0 623.15 L1344.0 622.97 L1346.0 622.79 L1348.0 622.64 L1350.0 622.55 L1352.0 622.56 L1354.0 622.63 L1356.0 622.74 L1358.0 622.84 L1360.0 622.91 L1362.0 622.90 L1364.0 622.77 L1366.0 622.56 L1368.0 622.30 L1370.0 622.06 L1372.0 621.88 L1374.0 621.81 L1376.0 621.89 L1378.0 622.07 L1380.0 622.32 L1382.0 622.59 L1384.0 622.82 L1386.0 622.96 L1388.0 623.01 L1390.0 623.00 L1392.0 622.95 L1394.0 622.89 L1396.0 622.85 L1398.0 622.86 L1400.0 622.94 L1402.0 623.05 L1404.0 623.19 L1406.0 623.32 L1408.0 623.43 L1410.0 623.49 L1412.0 623.48 L1414.0 623.43 L1416.1 623.35 L1418.1 623.26 L1420.1 623.20 L1422.0 623.18 L1424.0 623.42 L1426.0 623.93 L1428.0 624.47 L1429.9 624.77 L1431.6 624.56 L1433.0 623.60 L1434.0 621.59 L1434.7 618.68 L1435.1 615.28 L1435.5 611.76 L1435.8 608.54 L1436.3 606.00 L1436.9 604.03 L1437.5 602.30 L1438.1 600.85 L1438.7 599.75 L1439.3 599.05 L1439.9 598.80 L1440.5 599.15 L1441.1 600.07 L1441.7 601.39 L1442.2 602.93 L1442.8 604.53 L1443.4 606.00 L1444.0 607.44 L1444.6 609.00 L1445.2 610.61 L1445.8 612.19 L1446.4 613.68 L1447.0 615.00 L1447.6 616.16 L1448.1 617.23 L1448.6 618.20 L1449.2 619.07 L1449.8 619.84 L1450.4 620.50 L1451.1 621.04 L1451.7 621.44 L1452.4 621.75 L1453.2 621.98 L1454.0 622.15 L1455.0 622.30 L1456.2 622.49 L1457.6 622.71 L1459.1 622.87 L1460.6 622.90 L1461.9 622.71 L1463.0 622.20 L1463.8 621.27 L1464.3 619.96 L1464.7 618.42 L1465.1 616.81 L1465.5 615.29 L1466.0 614.00 L1466.6 612.88 L1467.3 611.79 L1468.0 610.78 L1468.7 609.91 L1469.4 609.23 L1470.1 608.80 L1470.8 608.68 L1471.4 608.83 L1472.1 609.18 L1472.7 609.63 L1473.3 610.10 L1474.0 610.50 L1474.7 610.88 L1475.5 611.31 L1476.2 611.76 L1477.0 612.18 L1477.6 612.54 L1478.0 612.80" stroke="#e8b93e" stroke-width="2.4" fill="none" clip-path="url(#abv)"/>
<path d="M534 646.5H1478" stroke="#77777d" stroke-width="1.5"/>
<path d="M534.0 646.5V653" stroke="#77777d" stroke-width="1.5"/><path d="M639.7 646.5V653" stroke="#77777d" stroke-width="1.5"/><path d="M745.4 646.5V653" stroke="#77777d" stroke-width="1.5"/><path d="M851.1 646.5V653" stroke="#77777d" stroke-width="1.5"/><path d="M956.8 646.5V653" stroke="#77777d" stroke-width="1.5"/><path d="M1062.5 646.5V653" stroke="#77777d" stroke-width="1.5"/><path d="M1168.2 646.5V653" stroke="#77777d" stroke-width="1.5"/><path d="M1273.9 646.5V653" stroke="#77777d" stroke-width="1.5"/><path d="M1379.6 646.5V653" stroke="#77777d" stroke-width="1.5"/></svg><div class="gl" style="right:1038px;top:365.5px">Urgent</div><div class="gl" style="right:1038px;top:443.5px">Needs Action</div><div class="gl" style="right:1038px;top:596.5px">Medium</div><div class="gl" style="right:1038px;top:634.5px">Low</div><div class="xl" style="left:534.0px;top:655.5px">1900-01-01</div><div class="xl" style="left:639.7px;top:655.5px">1914-01-01</div><div class="xl" style="left:745.4px;top:655.5px">1928-01-01</div><div class="xl" style="left:851.1px;top:655.5px">1942-01-01</div><div class="xl" style="left:956.8px;top:655.5px">1956-01-01</div><div class="xl" style="left:1062.5px;top:655.5px">1970-01-01</div><div class="xl" style="left:1168.2px;top:655.5px">1984-01-01</div><div class="xl" style="left:1273.9px;top:655.5px">1998-01-01</div><div class="xl" style="left:1379.6px;top:655.5px">2012-01-01</div><div class="box" style="left:18px;top:749px;width:500px;height:260px"></div><div class="title" style="left:37px;top:768px">Top Products by Risk Category</div><div class="th" style="left:45.6px;top:820px">Product</div><svg class="abs" style="left:253.7px;top:810px" width="40" height="40"><path d="M10.26 27.87A10 10 0 0 1 9.34 25.57" stroke="#5fbf5f" stroke-width="2.4" fill="none" stroke-linecap="round"/><path d="M9.01 22.67A10 10 0 0 1 10.35 17.98" stroke="#e8bf4a" stroke-width="2.4" fill="none" stroke-linecap="round"/><path d="M12.16 15.70A10 10 0 0 1 18.76 13.00" stroke="#ea8a42" stroke-width="2.4" fill="none" stroke-linecap="round"/><path d="M21.65 13.36A10 10 0 0 1 27.74 27.87" stroke="#e35d4b" stroke-width="2.4" fill="none" stroke-linecap="round"/></svg><div class="thn" style="left:293.7px;top:820px">Urgent</div><svg class="abs" style="left:358.4px;top:810px" width="40" height="40"><path d="M20.83 13.17A10 10 0 0 1 27.51 28.26" stroke="#2b2b2e" stroke-width="1.5" fill="none" stroke-linecap="round"/><path d="M10.26 27.87A10 10 0 0 1 9.34 25.57" stroke="#5fbf5f" stroke-width="2.4" fill="none" stroke-linecap="round"/><path d="M9.01 22.67A10 10 0 0 1 10.35 17.98" stroke="#e8bf4a" stroke-width="2.4" fill="none" stroke-linecap="round"/><path d="M12.16 15.70A10 10 0 0 1 18.76 13.00" stroke="#ea8a42" stroke-width="2.4" fill="none" stroke-linecap="round"/></svg><div class="thn" style="left:397.4px;top:805px;line-height:26px">Needs<br>Action</div><div class="sep" style="left:36.6px;top:863px;width:462.9px"></div><div class="td" style="left:45.6px;top:871.0px">Matt Project</div><div class="num" style="left:262.7px;top:872.5px">48</div><div class="num" style="left:367.4px;top:872.5px">91</div><div class="sep" style="left:36.6px;top:903.3px;width:462.9px"></div><div class="td" style="left:45.6px;top:910.8px">UI Testing</div><div class="num" style="left:262.7px;top:912.3px">11</div><div class="num" style="left:367.4px;top:912.3px">20</div><div class="sep" style="left:36.6px;top:943.3px;width:462.9px"></div><div class="td" style="left:45.6px;top:950.5px">a Support Test</div><div class="num" style="left:262.7px;top:965px">8</div><div class="num" style="left:367.4px;top:965px">10</div><div class="box" style="left:535px;top:749px;width:500px;height:260px"></div><div class="title" style="left:554px;top:768px">Top Components by Risk Category</div><div class="th" style="left:562.6px;top:820px">Component</div><svg class="abs" style="left:788.5px;top:810px" width="40" height="40"><path d="M10.26 27.87A10 10 0 0 1 9.34 25.57" stroke="#5fbf5f" stroke-width="2.4" fill="none" stroke-linecap="round"/><path d="M9.01 22.67A10 10 0 0 1 10.35 17.98" stroke="#e8bf4a" stroke-width="2.4" fill="none" stroke-linecap="round"/><path d="M12.16 15.70A10 10 0 0 1 18.76 13.00" stroke="#ea8a42" stroke-width="2.4" fill="none" stroke-linecap="round"/><path d="M21.65 13.36A10 10 0 0 1 27.74 27.87" stroke="#e35d4b" stroke-width="2.4" fill="none" stroke-linecap="round"/></svg><div class="thn" style="left:828.5px;top:820px">Urgent</div><svg class="abs" style="left:893.2px;top:810px" width="40" height="40"><path d="M20.83 13.17A10 10 0 0 1 27.51 28.26" stroke="#2b2b2e" stroke-width="1.5" fill="none" stroke-linecap="round"/><path d="M10.26 27.87A10 10 0 0 1 9.34 25.57" stroke="#5fbf5f" stroke-width="2.4" fill="none" stroke-linecap="round"/><path d="M9.01 22.67A10 10 0 0 1 10.35 17.98" stroke="#e8bf4a" stroke-width="2.4" fill="none" stroke-linecap="round"/><path d="M12.16 15.70A10 10 0 0 1 18.76 13.00" stroke="#ea8a42" stroke-width="2.4" fill="none" stroke-linecap="round"/></svg><div class="thn" style="left:932.2px;top:805px;line-height:26px">Needs<br>Action</div><div class="sep" style="left:553.6px;top:863px;width:462.9px"></div><div class="td" style="left:562.6px;top:871.0px">log4j</div><div class="num" style="left:797.5px;top:872.5px">8</div><div class="num" style="left:902.2px;top:872.5px">0</div><div class="sep" style="left:553.6px;top:903.3px;width:462.9px"></div><div class="td" style="left:562.6px;top:910.5px;width:220px">Whose with ourselves<br>migh...</div><div class="num" style="left:797.5px;top:925.5px">2</div><div class="num" style="left:902.2px;top:925.5px">0</div><div class="sep" style="left:553.6px;top:968.8px;width:462.9px"></div><div class="box" style="left:1052px;top:749px;width:500px;height:260px"></div><div class="title" style="left:1071px;top:768px">Top Hosts by Risk Category</div><div class="th" style="left:1079.6px;top:820px">Host</div><svg class="abs" style="left:1314.4px;top:810px" width="40" height="40"><path d="M10.26 27.87A10 10 0 0 1 9.34 25.57" stroke="#5fbf5f" stroke-width="2.4" fill="none" stroke-linecap="round"/><path d="M9.01 22.67A10 10 0 0 1 10.35 17.98" stroke="#e8bf4a" stroke-width="2.4" fill="none" stroke-linecap="round"/><path d="M12.16 15.70A10 10 0 0 1 18.76 13.00" stroke="#ea8a42" stroke-width="2.4" fill="none" stroke-linecap="round"/><path d="M21.65 13.36A10 10 0 0 1 27.74 27.87" stroke="#e35d4b" stroke-width="2.4" fill="none" stroke-linecap="round"/></svg><div class="thn" style="left:1354.4px;top:820px">Urgent</div><svg class="abs" style="left:1419.1000000000001px;top:810px" width="40" height="40"><path d="M20.83 13.17A10 10 0 0 1 27.51 28.26" stroke="#2b2b2e" stroke-width="1.5" fill="none" stroke-linecap="round"/><path d="M10.26 27.87A10 10 0 0 1 9.34 25.57" stroke="#5fbf5f" stroke-width="2.4" fill="none" stroke-linecap="round"/><path d="M9.01 22.67A10 10 0 0 1 10.35 17.98" stroke="#e8bf4a" stroke-width="2.4" fill="none" stroke-linecap="round"/><path d="M12.16 15.70A10 10 0 0 1 18.76 13.00" stroke="#ea8a42" stroke-width="2.4" fill="none" stroke-linecap="round"/></svg><div class="thn" style="left:1458.1000000000001px;top:805px;line-height:26px">Needs<br>Action</div><div class="sep" style="left:1070.6px;top:863px;width:462.9000000000001px"></div><div class="td" style="left:1079.6px;top:871.0px">webserver1.example.com</div><div class="num" style="left:1323.4px;top:872.5px">8</div><div class="num" style="left:1428.1000000000001px;top:872.5px">0</div><div class="sep" style="left:1070.6px;top:903.3px;width:462.9000000000001px"></div><div class="td" style="left:1079.6px;top:910.5px;width:230px"><span style="letter-spacing:0.75px">ip-10-32-134-16.us-west-</span><br>2...</div><div class="num" style="left:1323.4px;top:925.5px">3</div><div class="num" style="left:1428.1000000000001px;top:925.5px">1</div><div class="sep" style="left:1070.6px;top:968.8px;width:462.9000000000001px"></div>
<div class="abs" style="left:0;top:975px;width:1562px;height:1px;background:#1b1d22"></div>
</body></html>
